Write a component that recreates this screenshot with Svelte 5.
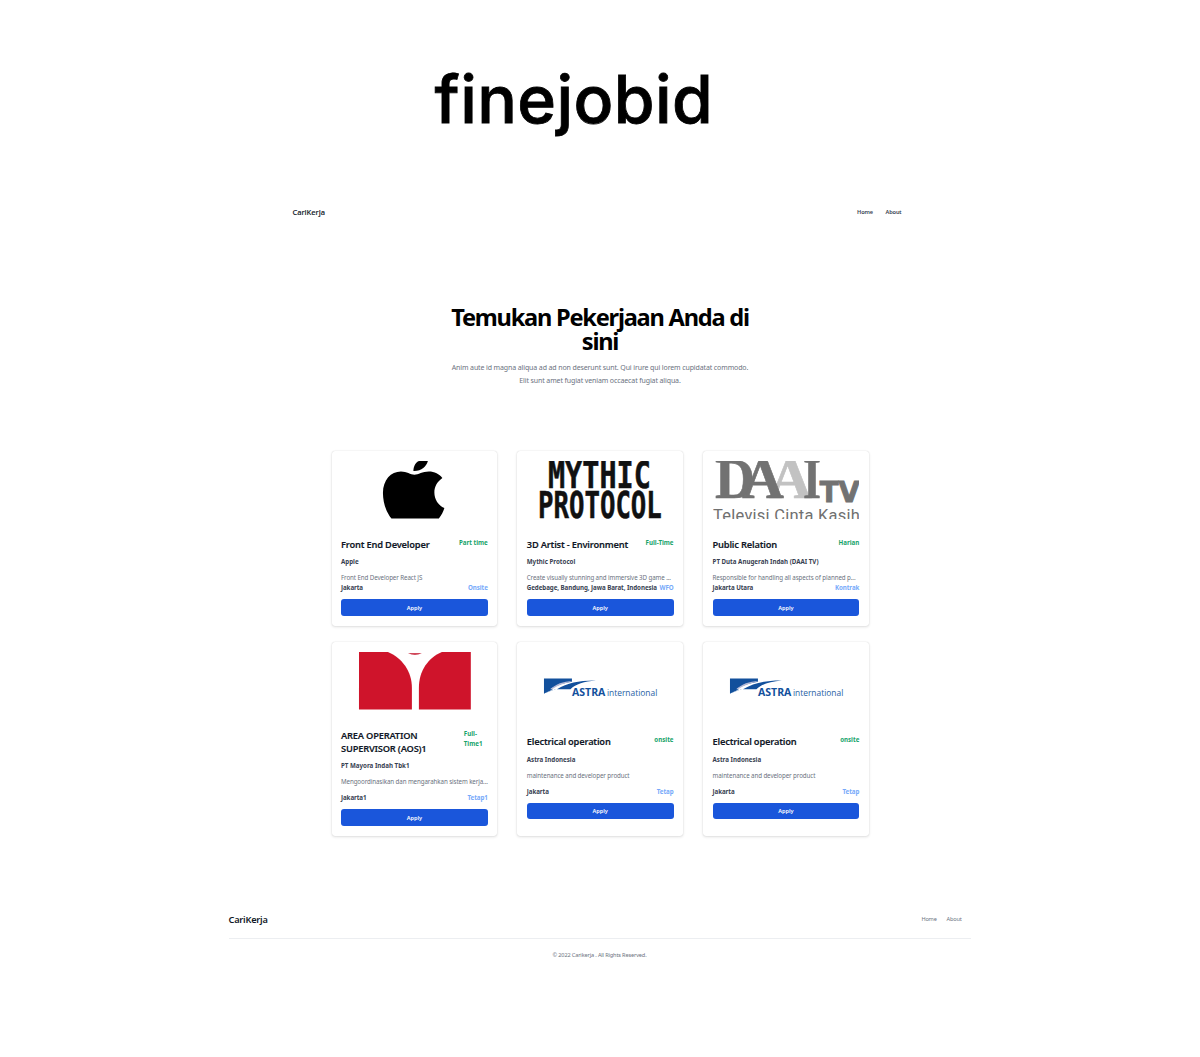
<script>
  const jobs = [
    { logo: 'apple', title: 'Front End Developer', type: 'Part time', company: 'Apple', desc: 'Front End Developer React JS', place: 'Jakarta', mode: 'Onsite' },
    { logo: 'mythic', title: '3D Artist - Environment', type: 'Full-Time', company: 'Mythic Protocol', desc: 'Create visually stunning and immersive 3D game ...', place: 'Gedebage, Bandung, Jawa Barat, Indonesia', mode: 'WFO' },
    { logo: 'daai', title: 'Public Relation', type: 'Harian', company: 'PT Duta Anugerah Indah (DAAI TV)', desc: 'Responsible for handling all aspects of planned p...', place: 'Jakarta Utara', mode: 'Kontrak' },
    { logo: 'mayora', title: 'AREA OPERATION SUPERVISOR (AOS)1', type: 'Full-Time1', company: 'PT Mayora Indah Tbk1', desc: 'Mengoordinasikan dan mengarahkan sistem kerja...', place: 'Jakarta1', mode: 'Tetap1', roomy: true },
    { logo: 'astra', title: 'Electrical operation', type: 'onsite', company: 'Astra Indonesia', desc: 'maintenance and developer product', place: 'Jakarta', mode: 'Tetap', roomy: true },
    { logo: 'astra', title: 'Electrical operation', type: 'onsite', company: 'Astra Indonesia', desc: 'maintenance and developer product', place: 'Jakarta', mode: 'Tetap', roomy: true }
  ];
</script>

<div class="page">
  <div class="wordmark">finejobid</div>

  <header>
    <span class="brand">CariKerja</span>
    <nav><a href="#home">Home</a><a href="#about">About</a></nav>
  </header>

  <section class="hero">
    <h1>Temukan Pekerjaan Anda di<br />sini</h1>
    <p>Anim aute id magna aliqua ad ad non deserunt sunt. Qui irure qui lorem cupidatat commodo.<br />Elit sunt amet fugiat veniam occaecat fugiat aliqua.</p>
  </section>

  <main>
    {#each jobs as job}
      <article>
        {#if job.logo === 'apple'}
          <svg class="logo" viewBox="0 0 147 58">
            <path d="M72.500 10C72.300 5 75.500 0.500 78.500 0H87C85.500 5.500 80.500 10.300 72.500 10Z" />
            <path d="M50.500 57.500C45 51 42 41 42 32C42 19 50 10.500 60 10.500C66 10.500 69.500 13.700 73.500 13.700C77.500 13.700 81.500 10.500 88 10.500C93.500 10.500 98.500 13 101.500 17C96.500 20.500 93.500 25.500 93.500 31.500C93.500 38.500 97.500 44.500 103.500 47C102.500 50.500 100.500 54.500 98 57.500Z" />
          </svg>
        {:else if job.logo === 'mythic'}
          <svg class="logo mythic" viewBox="0 0 147 58">
            <text x="21" y="26.500" textLength="103" lengthAdjust="spacingAndGlyphs">MYTHIC</text>
            <text x="11" y="57" textLength="124" lengthAdjust="spacingAndGlyphs">PROTOCOL</text>
          </svg>
        {:else if job.logo === 'daai'}
          <svg class="logo daai" viewBox="0 0 147 58">
            <text class="pale" x="56" y="37.500" textLength="43" lengthAdjust="spacingAndGlyphs">A</text>
            <text x="2" y="37.500" textLength="40" lengthAdjust="spacingAndGlyphs">D</text>
            <text x="29" y="37.500" textLength="42" lengthAdjust="spacingAndGlyphs">A</text>
            <text x="90" y="37.500" textLength="18" lengthAdjust="spacingAndGlyphs">I</text>
            <text class="tv" x="107" y="41" textLength="40" lengthAdjust="spacingAndGlyphs">TV</text>
            <text class="motto" x="0" y="60" textLength="147" lengthAdjust="spacing">Televisi Cinta Kasih</text>
          </svg>
        {:else if job.logo === 'mayora'}
          <svg class="logo" viewBox="0 0 147 58">
            <path fill="#cf142b" d="M18 0H47C61 6 71 19 71 36V57.500H18Z" />
            <path fill="#cf142b" d="M130 0H101C87 6 78 19 78 36V57.500H130Z" />
            <path fill="#d0485a" d="M67 1H81Q74 5 67 1Z" />
          </svg>
        {:else}
          <svg class="logo tall astra" viewBox="0 0 147 64.500">
            <path fill="#12509c" d="M17 26.500H45V31L41 37H29L17 41.500Z" />
            <path fill="#fff" d="M17 41.500C27 33 42 27.500 69 28.500C56 30 49 32.500 43 37.500H28Z" />
            <path fill="#b4b9d6" d="M23 37.500C29 32 36 29.500 46 29C37 31.500 31 33.500 25.500 37Z" />
            <path fill="#12509c" d="M30 37.200C41 31 52 28.300 69 28.500C57 29.500 49 32 43.500 37.200Z" />
            <path fill="#12509c" d="M17 36V41.500L26 37.500Z" />
            <text class="strong" x="45" y="44.500" textLength="33.500" lengthAdjust="spacingAndGlyphs">ASTRA</text>
            <text x="80" y="44.500" textLength="50.500" lengthAdjust="spacingAndGlyphs">international</text>
          </svg>
        {/if}
        <div class="heading" class:wrapped={job.logo === 'mayora'}>
          <h2>{job.title}</h2>
          <span class="type">{job.type}</span>
        </div>
        <div class="company">{job.company}</div>
        <p class="desc" class:roomy={job.roomy}>{job.desc}</p>
        <div class="meta"><span>{job.place}</span><span class="mode">{job.mode}</span></div>
        <button>Apply</button>
      </article>
    {/each}
  </main>

  <footer>
    <div class="foot-top">
      <span class="foot-brand">CariKerja</span>
      <nav><a href="#home">Home</a><a href="#about">About</a></nav>
    </div>
    <div class="copy">© 2022 Carikerja . All Rights Reserved.</div>
  </footer>
</div>

<style>
  :global(body) { margin: 0; background: #fff; }
  .page {
    box-sizing: border-box;
    width: 1200px;
    height: 1057px;
    overflow: hidden;
    font-family: "Noto Sans", "Open Sans", sans-serif;
    color: #111827;
  }
  a { color: inherit; text-decoration: none; }
  .wordmark {
    padding: 59px 0 0 434.500px;
    height: 80px;
    font: 500 66px/80px Inter, sans-serif;
    letter-spacing: 0.400px;
    -webkit-text-stroke: .8px #000;
    color: #000;
  }
  header {
    display: flex;
    justify-content: space-between;
    align-items: center;
    width: 609px;
    height: 16px;
    margin: 65px 0 0 292.500px;
  }
  .brand { font-size: 7.500px; font-weight: 500; letter-spacing: -0.040px; -webkit-text-stroke: .1px currentColor; }
  header nav { display: flex; gap: 12.600px; font-size: 5.600px; font-weight: 600; letter-spacing: -0.120px; color: #374151; }
  .hero { margin-top: 85px; text-align: center; }
  h1 { margin: 0; font-size: 23.600px; line-height: 24px; font-weight: 700; letter-spacing: -1.220px; color: #000; }
  .hero p { margin: 8.600px 0 0; font-size: 7px; line-height: 12.900px; letter-spacing: -0.120px; color: #6b7280; }
  main {
    display: grid;
    grid-template-columns: repeat(3, 165.600px);
    gap: 16.200px 20.200px;
    margin: 63.300px 0 0 331.600px;
  }
  article {
    display: flex;
    flex-direction: column;
    box-sizing: border-box;
    padding: 9.900px 9.400px 9.700px;
    border-radius: 3px;
    background: #fff;
    box-shadow: 0 0 1px rgba(0, 0, 0, .2), 0 1px 3px rgba(0, 0, 0, .12);
  }
  .logo { display: block; width: 146.800px; height: 58px; overflow: hidden; }
  .logo.tall { height: 64.500px; }
  .mythic text { font: 700 36.500px "DejaVu Sans Mono", monospace; fill: #111; stroke: #111; stroke-width: .5px; }
  .daai text { font: 700 57px "Liberation Serif", serif; fill: #727272; stroke: #727272; stroke-width: .6px; }
  .daai .pale { fill: #c2c2c2; stroke: #c2c2c2; }
  .daai .tv { font: 700 28px "DejaVu Sans", sans-serif; stroke-width: 1px; }
  .daai .motto { font: 400 16.500px Roboto, sans-serif; fill: #707070; stroke: none; }
  .astra text { font: 400 9.200px "Open Sans", sans-serif; fill: #2860a4; }
  .astra .strong { font-size: 9.800px; font-weight: 700; fill: #12509c; }
  .heading { display: flex; justify-content: space-between; margin-top: 19.200px; }
  h2 { margin: 0; font-size: 9.300px; line-height: 13px; font-weight: 600; letter-spacing: -0.200px; -webkit-text-stroke: .12px currentColor; }
  .wrapped h2 { width: 100px; }
  .type { font-size: 6.200px; line-height: 10px; font-weight: 700; color: #16a36a; }
  .wrapped .type { width: 24px; }
  .company { margin-top: 6.500px; font-size: 6.200px; line-height: 10px; font-weight: 700; color: #374151; }
  .desc { margin: 6px 0 0; font-size: 6.200px; line-height: 10px; letter-spacing: -0.090px; color: #6b7280; white-space: nowrap; }
  .desc.roomy { margin-bottom: 6px; }
  .meta { display: flex; justify-content: space-between; font-size: 6.200px; line-height: 10px; font-weight: 700; letter-spacing: -0.060px; color: #374151; white-space: nowrap; }
  .mode { color: #76a9fa; }
  button {
    margin-top: 6px;
    height: 16.600px;
    padding: 0;
    border: 0;
    border-radius: 3px;
    background: #1a56db;
    color: #fff;
    font: 600 5.600px/16px "Noto Sans", sans-serif;
  }
  footer { width: 742px; margin: 75.500px 0 0 228.500px; }
  .foot-top { display: flex; justify-content: space-between; align-items: center; height: 16px; padding: 0 9px 11px 0; border-bottom: 1px solid #eceef1; }
  .foot-brand { font-size: 9.200px; font-weight: 600; letter-spacing: -0.220px; }
  .foot-top nav { display: flex; gap: 10px; font-size: 5.600px; letter-spacing: -0.200px; color: #6b7280; }
  .copy { margin-top: 11.300px; text-align: center; font-size: 5.600px; line-height: 10px; letter-spacing: -0.150px; color: #6b7280; }
</style>
